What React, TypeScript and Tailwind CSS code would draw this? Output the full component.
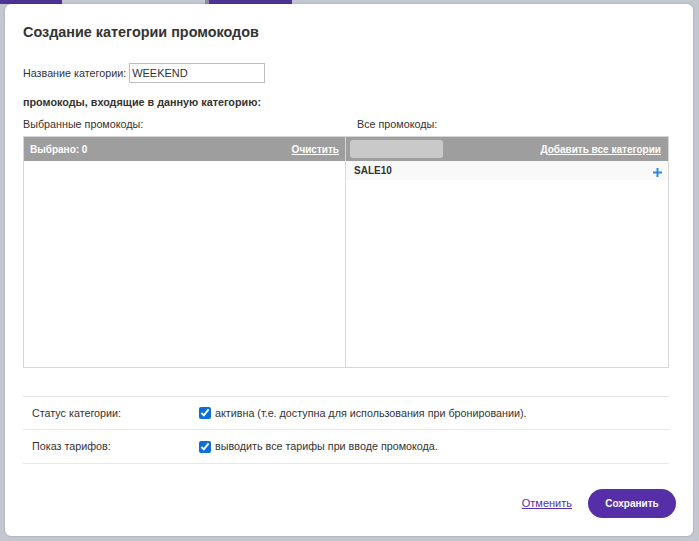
import { useState } from "react";

const font = { fontFamily: '"Liberation Sans", Arial, sans-serif' };

export default function App() {
  const [name, setName] = useState("WEEKEND");
  const [active, setActive] = useState(true);
  const [showAll, setShowAll] = useState(true);

  return (
    <div className="w-[699px] h-[541px] bg-[#c3c7cf] overflow-hidden relative text-[#333]" style={font}>
      {/* страница под оверлеем */}
      <div className="flex h-[4px]">
        <div className="w-[62px] bg-[#4b3496]" />
        <div className="w-[143px] bg-[#c3c7cf]" />
        <div className="w-[4px] bg-[#8a8fa0]" />
        <div className="w-[83px] bg-[#4b3496]" />
      </div>

      {/* модальное окно */}
      <div className="absolute left-[5px] top-[4px] w-[688px] h-[532px] bg-white rounded-[6px] shadow-[0_0_2px_rgba(0,0,0,0.25)] flex flex-col">
        <div className="pl-[18px] pr-[24px] flex flex-col">
          <h1 className="mt-[18px] text-[14.4px] leading-[20px] font-bold text-[#333]">
            Создание категории промокодов
          </h1>

          <div className="mt-[21px] h-[20px] flex items-center gap-[3px] text-[10.75px]">
            <span>Название категории:</span>
            <input
              value={name}
              onChange={(e) => setName(e.target.value)}
              className="w-[136px] h-[20px] border border-[#bdbdbd] px-[2px] text-[11px] text-[#333] outline-none"
              style={font}
            />
          </div>

          <p className="mt-[11px] text-[10.8px] leading-[16px] font-bold">
            промокоды, входящие в данную категорию:
          </p>

          <div className="mt-[6px] grid grid-cols-2 text-[10.75px] leading-[16px]">
            <span>Выбранные промокоды:</span>
            <span className="pl-[11px]">Все промокоды:</span>
          </div>

          {/* списки */}
          <div className="mt-[4px] h-[232px] border border-[#d6d6d6] grid grid-cols-2">
            <div className="border-r border-[#d6d6d6] flex flex-col">
              <div className="h-[24px] bg-[#9e9e9e] flex items-center justify-between px-[6px] text-[10px] font-bold text-white">
                <span>Выбрано: 0</span>
                <a href="#" className="underline">Очистить</a>
              </div>
            </div>
            <div className="flex flex-col">
              <div className="h-[24px] bg-[#9e9e9e] flex items-center justify-between pl-[4px] pr-[7px] text-[10px] font-bold text-white">
                <input className="w-[93px] h-[18px] rounded-[3px] bg-[#c9c9c9] outline-none" />
                <a href="#" className="underline">Добавить все категории</a>
              </div>
              <div className="h-[19px] bg-[#f9f9f9] flex items-center justify-between pl-[8px] pr-[6px] text-[10px] font-bold text-[#333]">
                <span className="mt-[-1px]">SALE10</span>
                <svg width="9" height="9" viewBox="0 0 9 9" className="mt-[4px]">
                  <path d="M4.5 0v9M0 4.5h9" stroke="#2a8be6" strokeWidth="2" />
                </svg>
              </div>
            </div>
          </div>

          {/* настройки */}
          <div className="mt-[28px] text-[10.75px]">
            <div className="h-[33px] border-t border-[#e3e3e3] flex items-center">
              <span className="w-[176px] pl-[9px]">Статус категории:</span>
              <label className="flex items-center gap-[4px]">
                <input
                  type="checkbox"
                  checked={active}
                  onChange={(e) => setActive(e.target.checked)}
                  className="w-[12px] h-[12px] accent-[#0b6fd6]"
                />
                <span>активна (т.е. доступна для использования при бронировании).</span>
              </label>
            </div>
            <div className="h-[34px] border-t border-[#ebe9df] flex items-center">
              <span className="w-[176px] pl-[9px]">Показ тарифов:</span>
              <label className="flex items-center gap-[4px]">
                <input
                  type="checkbox"
                  checked={showAll}
                  onChange={(e) => setShowAll(e.target.checked)}
                  className="w-[12px] h-[12px] accent-[#0b6fd6]"
                />
                <span>выводить все тарифы при вводе промокода.</span>
              </label>
            </div>
            <div className="border-t border-[#ebe9df]" />
          </div>
        </div>

        {/* кнопки */}
        <div className="mt-[25px] pr-[17px] flex items-center justify-end gap-[16px]">
          <a href="#" className="text-[11px] text-[#5a2fa9] underline">Отменить</a>
          <button
            type="button"
            className="w-[88px] h-[29px] rounded-full bg-[#552ea8] text-white text-[10px] font-bold"
          >
            Сохранить
          </button>
        </div>
      </div>
    </div>
  );
}
